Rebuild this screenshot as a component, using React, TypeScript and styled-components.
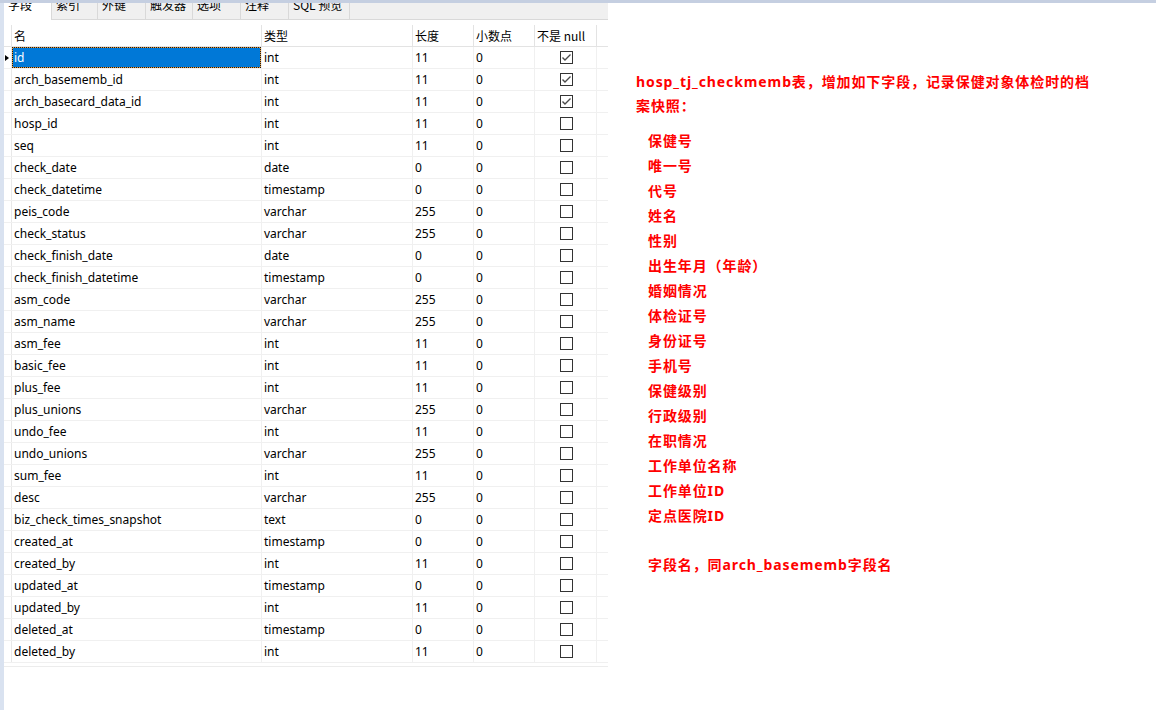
import React from "react";
import styled, { createGlobalStyle } from "styled-components";

const Global = createGlobalStyle`
  html, body { margin: 0; padding: 0; background: #ffffff; }
  body { font-family: "Noto Sans", "Noto Sans CJK SC", sans-serif; }
  #root { width: 1156px; height: 710px; overflow: hidden; }
`;

type Field = { name: string; type: string; len: string; dec: string; notNull: boolean };

const fields: Field[] = [
  { name: "id", type: "int", len: "11", dec: "0", notNull: true },
  { name: "arch_basememb_id", type: "int", len: "11", dec: "0", notNull: true },
  { name: "arch_basecard_data_id", type: "int", len: "11", dec: "0", notNull: true },
  { name: "hosp_id", type: "int", len: "11", dec: "0", notNull: false },
  { name: "seq", type: "int", len: "11", dec: "0", notNull: false },
  { name: "check_date", type: "date", len: "0", dec: "0", notNull: false },
  { name: "check_datetime", type: "timestamp", len: "0", dec: "0", notNull: false },
  { name: "peis_code", type: "varchar", len: "255", dec: "0", notNull: false },
  { name: "check_status", type: "varchar", len: "255", dec: "0", notNull: false },
  { name: "check_finish_date", type: "date", len: "0", dec: "0", notNull: false },
  { name: "check_finish_datetime", type: "timestamp", len: "0", dec: "0", notNull: false },
  { name: "asm_code", type: "varchar", len: "255", dec: "0", notNull: false },
  { name: "asm_name", type: "varchar", len: "255", dec: "0", notNull: false },
  { name: "asm_fee", type: "int", len: "11", dec: "0", notNull: false },
  { name: "basic_fee", type: "int", len: "11", dec: "0", notNull: false },
  { name: "plus_fee", type: "int", len: "11", dec: "0", notNull: false },
  { name: "plus_unions", type: "varchar", len: "255", dec: "0", notNull: false },
  { name: "undo_fee", type: "int", len: "11", dec: "0", notNull: false },
  { name: "undo_unions", type: "varchar", len: "255", dec: "0", notNull: false },
  { name: "sum_fee", type: "int", len: "11", dec: "0", notNull: false },
  { name: "desc", type: "varchar", len: "255", dec: "0", notNull: false },
  { name: "biz_check_times_snapshot", type: "text", len: "0", dec: "0", notNull: false },
  { name: "created_at", type: "timestamp", len: "0", dec: "0", notNull: false },
  { name: "created_by", type: "int", len: "11", dec: "0", notNull: false },
  { name: "updated_at", type: "timestamp", len: "0", dec: "0", notNull: false },
  { name: "updated_by", type: "int", len: "11", dec: "0", notNull: false },
  { name: "deleted_at", type: "timestamp", len: "0", dec: "0", notNull: false },
  { name: "deleted_by", type: "int", len: "11", dec: "0", notNull: false },
];

const tabs: { label: string; width: number }[] = [
  { label: "字段", width: 48 },
  { label: "索引", width: 46 },
  { label: "外键", width: 48 },
  { label: "触发器", width: 47 },
  { label: "选项", width: 48 },
  { label: "注释", width: 48 },
  { label: "SQL 预览", width: 61 },
];

const items = [
  "保健号",
  "唯一号",
  "代号",
  "姓名",
  "性别",
  "出生年月（年龄）",
  "婚姻情况",
  "体检证号",
  "身份证号",
  "手机号",
  "保健级别",
  "行政级别",
  "在职情况",
  "工作单位名称",
  "工作单位ID",
  "定点医院ID",
];

const COLS = "8px 250px 151px 61px 61px 62px 11px";

const Page = styled.div`
  width: 1156px;
  height: 710px;
  display: flex;
  flex-direction: column;
  background: #ffffff;
`;

const TopBand = styled.div`
  height: 3px;
  background: #c5cfe1;
  flex: none;
`;

const Body = styled.div`
  flex: 1;
  display: flex;
  min-height: 0;
`;

const LeftPane = styled.div`
  width: 608px;
  display: flex;
  flex: none;
`;

const Strip = styled.div`
  width: 4px;
  background: #d9e2f0;
  flex: none;
`;

const Editor = styled.div`
  flex: 1;
  display: flex;
  flex-direction: column;
  background: #ffffff;
`;

const TabBar = styled.div`
  height: 16px;
  display: flex;
  background: #f0f0f0;
  border-bottom: 1px solid #d9d9d9;
  flex: none;
`;

const Tab = styled.div<{ $w: number; $active?: boolean }>`
  width: ${(p) => p.$w}px;
  box-sizing: border-box;
  height: ${(p) => (p.$active ? "17px" : "16px")};
  padding-left: 4px;
  overflow: hidden;
  background: ${(p) => (p.$active ? "#ffffff" : "#f0f0f0")};
  border-right: 1px solid #d9d9d9;
  font-family: "Noto Sans CJK SC", "Noto Sans", sans-serif;
  font-size: 12px;
  line-height: 14px;
  color: #000;
  white-space: nowrap;
  flex: none;
`;

const TabLabel = styled.div`
  margin-top: -5px;
`;

const Grid = styled.div`
  margin-top: 5px;
  display: flex;
  flex-direction: column;
`;

const Row = styled.div<{ $header?: boolean }>`
  display: grid;
  grid-template-columns: ${COLS};
  height: 22px;
  box-sizing: border-box;
  border-bottom: 1px solid ${(p) => (p.$header ? "#e3e3e3" : "#f0f0f0")};
`;

const Cell = styled.div<{ $header?: boolean; $center?: boolean; $last?: boolean }>`
  box-sizing: border-box;
  height: 21px;
  border-right: ${(p) => (p.$last ? "none" : `1px solid ${p.$header ? "#e3e3e3" : "#f0f0f0"}`)};
  padding-left: 2px;
  display: flex;
  align-items: center;
  justify-content: ${(p) => (p.$center ? "center" : "flex-start")};
  font-family: ${(p) =>
    p.$header ? `"Noto Sans CJK SC", "Noto Sans", sans-serif` : `"Noto Sans", "Noto Sans CJK SC", sans-serif`};
  font-size: 12px;
  color: #000;
  white-space: nowrap;
  overflow: hidden;
`;

const IndicatorCell = styled.div<{ $header?: boolean }>`
  box-sizing: border-box;
  height: 21px;
  border-right: 1px solid ${(p) => (p.$header ? "#e3e3e3" : "#e8e8e8")};
  display: flex;
  align-items: center;
  padding-left: 1px;
`;

const Arrow = styled.div`
  width: 0;
  height: 0;
  border-top: 3.5px solid transparent;
  border-bottom: 3.5px solid transparent;
  border-left: 4px solid #000;
`;

const SelectedCell = styled.div`
  box-sizing: border-box;
  height: 21px;
  border-right: 1px solid #f0f0f0;
  display: flex;
`;

const SelectedInner = styled.div`
  flex: 1;
  box-sizing: border-box;
  border: 1px dotted #1a1a1a;
  background: linear-gradient(#0078d7, #0078d7) padding-box, #e49a3c border-box;
  color: #ffffff;
  font-family: "Noto Sans", sans-serif;
  font-size: 12px;
  display: flex;
  align-items: center;
  padding-left: 1px;
`;

const Check = styled.div`
  width: 13px;
  height: 13px;
  box-sizing: border-box;
  border: 1px solid #333333;
  background: #ffffff;
  display: flex;
  align-items: center;
  justify-content: center;
`;

const BottomRule = styled.div`
  margin-top: 3px;
  height: 1px;
  background: #ececec;
`;

const RightPane = styled.div`
  flex: 1;
  padding: 67px 0 0 28px;
  color: #ff0000;
  font-family: "Noto Sans", "Noto Sans CJK SC", sans-serif;
  font-weight: 700;
  font-size: 14px;
  letter-spacing: 0.9px;
`;

const Lead = styled.div`
  line-height: 24px;
  white-space: nowrap;
`;

const List = styled.div`
  margin-top: 10px;
  padding-left: 12px;
  display: flex;
  flex-direction: column;
`;

const Item = styled.div`
  line-height: 25px;
  height: 25px;
  white-space: nowrap;
`;

const Note = styled.div`
  margin-top: 24px;
  padding-left: 12px;
  line-height: 25px;
  white-space: nowrap;
`;

const CheckBox: React.FC<{ checked: boolean }> = ({ checked }) => (
  <Check>
    {checked && (
      <svg width="11" height="11" viewBox="0 0 11 11">
        <polyline points="1.5,5.5 4,8 9.5,2.5" fill="none" stroke="#4a4a4a" strokeWidth="1.4" />
      </svg>
    )}
  </Check>
);

export default function App() {
  return (
    <>
      <Global />
      <Page>
        <TopBand />
        <Body>
          <LeftPane>
            <Strip />
            <Editor>
              <TabBar>
                {tabs.map((t, i) => (
                  <Tab key={t.label} $w={t.width} $active={i === 0}>
                    <TabLabel>{t.label}</TabLabel>
                  </Tab>
                ))}
              </TabBar>
              <Grid>
                <Row $header>
                  <IndicatorCell $header />
                  <Cell $header>名</Cell>
                  <Cell $header>类型</Cell>
                  <Cell $header>长度</Cell>
                  <Cell $header>小数点</Cell>
                  <Cell $header>不是 null</Cell>
                  <Cell $header $last />
                </Row>
                {fields.map((f, i) => (
                  <Row key={f.name}>
                    <IndicatorCell>{i === 0 && <Arrow />}</IndicatorCell>
                    {i === 0 ? (
                      <SelectedCell>
                        <SelectedInner>{f.name}</SelectedInner>
                      </SelectedCell>
                    ) : (
                      <Cell>{f.name}</Cell>
                    )}
                    <Cell>{f.type}</Cell>
                    <Cell>{f.len}</Cell>
                    <Cell>{f.dec}</Cell>
                    <Cell $center>
                      <CheckBox checked={f.notNull} />
                    </Cell>
                    <Cell $last />
                  </Row>
                ))}
                <BottomRule />
              </Grid>
            </Editor>
          </LeftPane>
          <RightPane>
            <Lead>
              hosp_tj_checkmemb表，增加如下字段，记录保健对象体检时的档
              <br />
              案快照：
            </Lead>
            <List>
              {items.map((it) => (
                <Item key={it}>{it}</Item>
              ))}
            </List>
            <Note>字段名，同arch_basememb字段名</Note>
          </RightPane>
        </Body>
      </Page>
    </>
  );
}
